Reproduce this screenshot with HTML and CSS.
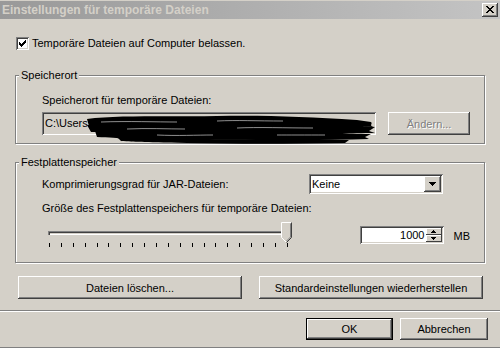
FILE: index.html
```html
<!DOCTYPE html>
<html lang="de">
<head>
    <meta charset="UTF-8">
    <title>Einstellungen für temporäre Dateien</title>
    <link rel="stylesheet" href="styles.css">
</head>
<body>
<div class="dialog">
    <div class="titlebar">
        <span class="title">Einstellungen für temporäre Dateien</span>
        <button class="close-btn">
            <svg width="8" height="7" viewBox="0 0 8 7" shape-rendering="crispEdges">
                <path d="M0 0h2v1H0zM6 0h2v1H6zM1 1h2v1H1zM5 1h2v1H5zM2 2h4v1H2zM3 3h2v1H3zM2 4h4v1H2zM1 5h2v1H1zM5 5h2v1H5zM0 6h2v1H0zM6 6h2v1H6z" fill="#000"/>
            </svg>
        </button>
    </div>

    <div class="content">
        <label class="check-row">
            <span class="checkbox">
                <svg width="7" height="7" viewBox="0 0 7 7" shape-rendering="crispEdges">
                    <path d="M6 0h1v1H6zM5 1h2v1H5zM0 2h1v1H0zM4 2h3v1H4zM0 3h2v1H0zM3 3h3v1H3zM0 4h5v1H0zM1 5h3v1H1zM2 6h1v1H2z" fill="#000"/>
                </svg>
            </span>
            Temporäre Dateien auf Computer belassen.
        </label>

        <fieldset class="group">
            <legend>Speicherort</legend>
            <div class="group-body">
                <div class="field-label">Speicherort für temporäre Dateien:</div>
                <div class="path-row">
                    <div class="textbox path-box">
                        C:\Users\
                        <!-- geschwärzter Pfad -->
                        <svg class="scribble" width="290" height="30" viewBox="0 0 290 30">
                            <path d="M0 5 C30 1 80 3 130 2 S220 3 270 6 L284 8 C286 10 282 11 286 13 C230 11 150 12 80 13 S20 12 2 12 Z" fill="#000"/>
                            <path d="M0 11 C60 9 140 10 200 10 S262 11 288 13 L282 17 L288 19 C220 19 150 21 90 20 S30 19 4 18 Z" fill="#000"/>
                            <path d="M8 17 C70 17 130 19 190 18 S250 20 284 20 L278 23 L282 25 C220 27 160 25 100 26 S40 24 10 23 Z" fill="#000"/>
                            <path d="M30 23 C90 24 130 26 170 25 S230 26 262 26 L258 29 C200 30 150 30 100 29 S50 28 34 27 Z" fill="#000"/>
                            <path d="M14 8 C40 7 70 8 90 8 M130 7 C150 6 170 7 196 7 M40 15 C60 14 80 15 98 15 M150 14 C170 13 200 14 226 14 M70 21 C90 22 110 21 126 21 M190 21 C200 21 220 21 238 21" stroke="#fff" stroke-width="0.8" fill="none" opacity="0.7"/>
                        </svg>
                    </div>
                    <button class="btn change-btn" disabled>Ändern...</button>
                </div>
            </div>
        </fieldset>

        <fieldset class="group group-disk">
            <legend>Festplattenspeicher</legend>
            <div class="group-body">
                <div class="combo-row">
                    <span>Komprimierungsgrad für JAR-Dateien:</span>
                    <div class="textbox combo">
                        <span class="combo-value">Keine</span>
                        <span class="combo-btn">
                            <svg width="7" height="4" viewBox="0 0 7 4" shape-rendering="crispEdges">
                                <path d="M0 0h7v1H0zM1 1h5v1H1zM2 2h3v1H2zM3 3h1v1H3z" fill="#000"/>
                            </svg>
                        </span>
                    </div>
                </div>
                <div class="field-label size-label">Größe des Festplattenspeichers für temporäre Dateien:</div>
                <div class="size-row">
                    <div class="slider">
                        <div class="track"></div>
                        <svg class="thumb" width="11" height="21" viewBox="0 0 11 21">
                            <polygon points="0.5,0.5 10.5,0.5 10.5,15.5 5.5,20.5 0.5,15.5" fill="#d4d0c8"/>
                            <polyline points="0.5,15.5 0.5,0.5 10.5,0.5" stroke="#fff" fill="none"/>
                            <polyline points="0.5,15.5 5,20" stroke="#fff" fill="none"/>
                            <polyline points="9.5,1.5 9.5,15 5.5,19" stroke="#808080" fill="none"/>
                            <polyline points="10.5,0.5 10.5,15.5 5.5,20.5" stroke="#404040" fill="none"/>
                        </svg>
                        <div class="ticks">
                            <span></span><span></span><span></span><span></span><span></span><span></span><span></span>
                            <span></span><span></span><span></span><span></span><span></span><span></span><span></span>
                            <span></span><span></span><span></span><span></span><span></span><span></span><span></span>
                        </div>
                    </div>
                    <div class="textbox spinner">
                        <span class="spin-value">1000</span>
                        <span class="spin-btns">
                            <span class="spin-btn">
                                <svg width="5" height="3" viewBox="0 0 5 3" shape-rendering="crispEdges">
                                    <path d="M2 0h1v1H2zM1 1h3v1H1zM0 2h5v1H0z" fill="#000"/>
                                </svg>
                            </span>
                            <span class="spin-btn">
                                <svg width="5" height="3" viewBox="0 0 5 3" shape-rendering="crispEdges">
                                    <path d="M0 0h5v1H0zM1 1h3v1H1zM2 2h1v1H2z" fill="#000"/>
                                </svg>
                            </span>
                        </span>
                    </div>
                    <span class="unit">MB</span>
                </div>
            </div>
        </fieldset>

        <div class="actions">
            <button class="btn wide-btn">Dateien löschen...</button>
            <button class="btn wide-btn">Standardeinstellungen wiederherstellen</button>
        </div>
    </div>

    <div class="separator"></div>

    <div class="footer">
        <button class="btn default-btn ok-btn">OK</button>
        <button class="btn cancel-btn">Abbrechen</button>
    </div>
</div>
</body>
</html>
```

FILE: styles.css
```css
body {
    margin: 0;
    font-family: 'Liberation Sans', Arial, sans-serif;
    font-size: 11px;
    color: #000;
    background-color: #d4d0c8;
}

.dialog {
    width: 500px;
    height: 348px;
    box-sizing: border-box;
    border-bottom: 1px solid #808080;
    display: flex;
    flex-direction: column;
    overflow: hidden;
}

/* Titelleiste (inaktiv) */
.titlebar {
    height: 19px;
    display: flex;
    align-items: center;
    padding: 0 2px;
    background: linear-gradient(90deg, #999999, #c4c4c4);
    box-shadow: inset 0 1px 0 #d4d0c8;
}

.title {
    font-weight: bold;
    font-size: 12px;
    color: #d4d0c8;
}

.close-btn {
    margin-left: auto;
    width: 16px;
    height: 14px;
    padding: 0;
    border: none;
    background-color: #d4d0c8;
    display: flex;
    align-items: center;
    justify-content: center;
    box-shadow: inset -1px -1px #404040, inset 1px 1px #fff, inset -2px -2px #808080;
}

.content {
    padding: 0 15px;
    display: flex;
    flex-direction: column;
}

.check-row {
    margin-top: 18px;
    height: 13px;
    line-height: 13px;
    padding-left: 1px;
    display: flex;
    align-items: center;
    gap: 3px;
}

.checkbox {
    width: 13px;
    height: 13px;
    box-sizing: border-box;
    background-color: #fff;
    display: flex;
    align-items: center;
    justify-content: center;
    box-shadow: inset 1px 1px #808080, inset -1px -1px #fff, inset 2px 2px #404040, inset -2px -2px #d4d0c8;
}

/* Gruppenrahmen */
.group {
    margin: 19px 0 0;
    padding: 0 14px 8px 3px;
    border: 1px solid #808080;
    box-shadow: 1px 1px 0 #fff, inset 1px 1px 0 #fff;
    min-width: 0;
}

.group legend {
    padding: 0 2px;
    line-height: 12px;
    background-color: #d4d0c8;
}

.group-body {
    padding: 13px 0 0 23px;
}

.field-label {
    height: 13px;
    line-height: 13px;
}

.textbox {
    box-sizing: border-box;
    box-shadow: inset 1px 1px #808080, inset -1px -1px #fff, inset 2px 2px #404040, inset -2px -2px #d4d0c8;
}

.path-row {
    margin-top: 5px;
    display: flex;
    gap: 12px;
}

.path-box {
    position: relative;
    width: 335px;
    height: 23px;
    line-height: 23px;
    padding-left: 3px;
    white-space: nowrap;
}

.scribble {
    position: absolute;
    left: 45px;
    top: 2px;
}

.btn {
    font-family: inherit;
    font-size: 11px;
    color: #000;
    background-color: #d4d0c8;
    border: none;
    padding: 0;
    box-shadow: inset -1px -1px #404040, inset 1px 1px #fff, inset -2px -2px #808080, inset 2px 2px #d4d0c8;
}

.change-btn {
    width: 82px;
    height: 23px;
    color: #808080;
    text-shadow: 1px 1px 0 #fff;
}

.group-disk {
    margin-top: 12px;
    padding-bottom: 14px;
}

.group-disk .group-body {
    padding-top: 6px;
}

.combo-row {
    height: 20px;
    display: flex;
    align-items: center;
}

.combo {
    margin-left: auto;
    margin-right: 27px;
    width: 134px;
    height: 20px;
    background-color: #fff;
    display: flex;
    align-items: center;
    padding: 2px;
}

.combo-value {
    flex: 1;
    padding-left: 1px;
}

.combo-btn {
    width: 17px;
    height: 16px;
    background-color: #d4d0c8;
    display: flex;
    align-items: center;
    justify-content: center;
    box-shadow: inset -1px -1px #404040, inset 1px 1px #fff, inset -2px -2px #808080;
}

.size-label {
    margin-top: 8px;
}

.size-row {
    margin-top: 5px;
    height: 28px;
    display: flex;
    align-items: flex-start;
}

.slider {
    position: relative;
    width: 252px;
    height: 28px;
}

.track {
    position: absolute;
    left: 6px;
    top: 11px;
    width: 244px;
    height: 4px;
    box-shadow: inset 1px 1px #808080, inset 2px 2px #404040, inset -1px -1px #fff, inset -2px -2px #d4d0c8;
}

.thumb {
    position: absolute;
    left: 239px;
    top: 2px;
}

.ticks {
    position: absolute;
    left: 7px;
    top: 23px;
    width: 239px;
    height: 4px;
    display: flex;
    justify-content: space-between;
}

.ticks span {
    width: 1px;
    height: 4px;
    background-color: #000;
}

.spinner {
    margin-left: 66px;
    margin-top: 6px;
    width: 84px;
    height: 18px;
    background-color: #fff;
    display: flex;
    align-items: center;
    padding: 2px;
}

.spin-value {
    flex: 1;
    text-align: right;
    padding-right: 1px;
}

.spin-btns {
    width: 16px;
    height: 14px;
    display: flex;
    flex-direction: column;
}

.spin-btn {
    flex: 1;
    background-color: #d4d0c8;
    display: flex;
    align-items: center;
    justify-content: center;
    box-shadow: inset -1px -1px #404040, inset 1px 1px #fff;
}

.unit {
    margin-left: 10px;
    margin-top: 10px;
    line-height: 13px;
}

.actions {
    margin-top: 13px;
    padding: 0 2px 0 3px;
    display: flex;
    justify-content: space-between;
}

.wide-btn {
    width: 224px;
    height: 23px;
}

.separator {
    margin-top: 11px;
    height: 1px;
    background-color: #808080;
    border-bottom: 1px solid #fff;
}

.footer {
    margin-top: 6px;
    padding-right: 12px;
    display: flex;
    justify-content: flex-end;
    gap: 7px;
}

.ok-btn {
    width: 87px;
    height: 22px;
}

.default-btn {
    box-shadow: inset 0 0 0 1px #000, inset -2px -2px #404040, inset 2px 2px #fff, inset -3px -3px #808080;
}

.cancel-btn {
    width: 88px;
    height: 22px;
}
```
